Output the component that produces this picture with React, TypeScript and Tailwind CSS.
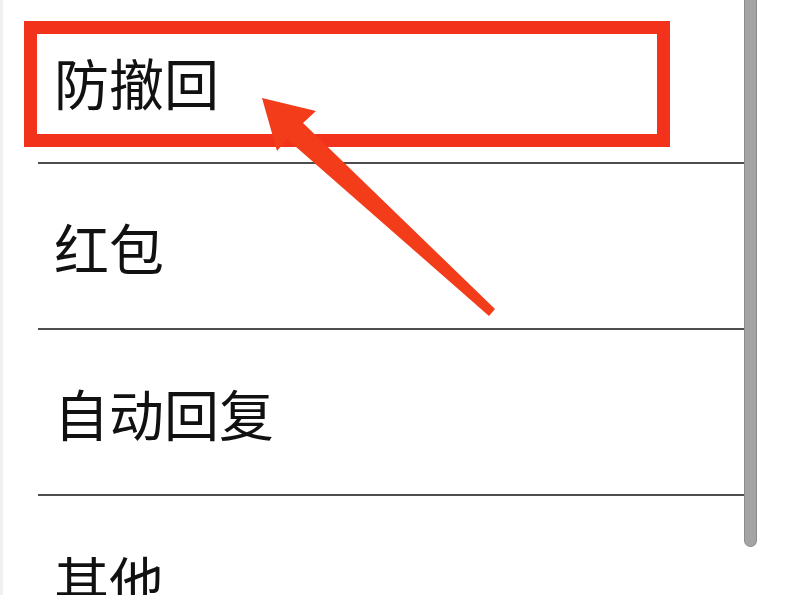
import React from 'react';

const items = ['防撤回', '红包', '自动回复', '其他'];

export default function App() {
  return (
    <main className="relative w-[793px] h-[595px] overflow-hidden bg-white">
      <div className="flex h-full">
        <div className="w-[38px] border-l-[3px] border-[#f0f0f0]" />

        {/* settings list */}
        <ul className="w-[706px] flex flex-col">
          {items.map((label, i) => (
            <li
              key={label}
              className={
                'h-[166px] shrink-0 flex items-center pl-[16px] text-[#111] text-[55px] leading-none ' +
                (i < items.length - 1 ? 'border-b-2 border-[#4d4d4d]' : '')
              }
              style={{ height: i === 0 ? 164 : 166 }}
            >
              <span style={{ fontFamily: '"Noto Sans CJK SC", "Noto Sans", sans-serif' }}>{label}</span>
            </li>
          ))}
        </ul>

        {/* scrollbar */}
        <div className="w-[13px] h-[557px] -mt-[10px] rounded-b-full bg-[#a4a4a4] border-x border-b border-[#8c8c8c] shrink-0" />
      </div>

      {/* highlight box */}
      <div className="absolute left-[24px] top-[21px] w-[646px] h-[126px] border-[13px] border-[#f3321b]" />

      {/* arrow */}
      <svg className="absolute inset-0" width="793" height="595" viewBox="0 0 793 595">
        <polygon
          points="262,98 316,111 303,123 495,309 489,316 287,139 277,151"
          fill="#f23c1a"
        />
      </svg>
    </main>
  );
}
